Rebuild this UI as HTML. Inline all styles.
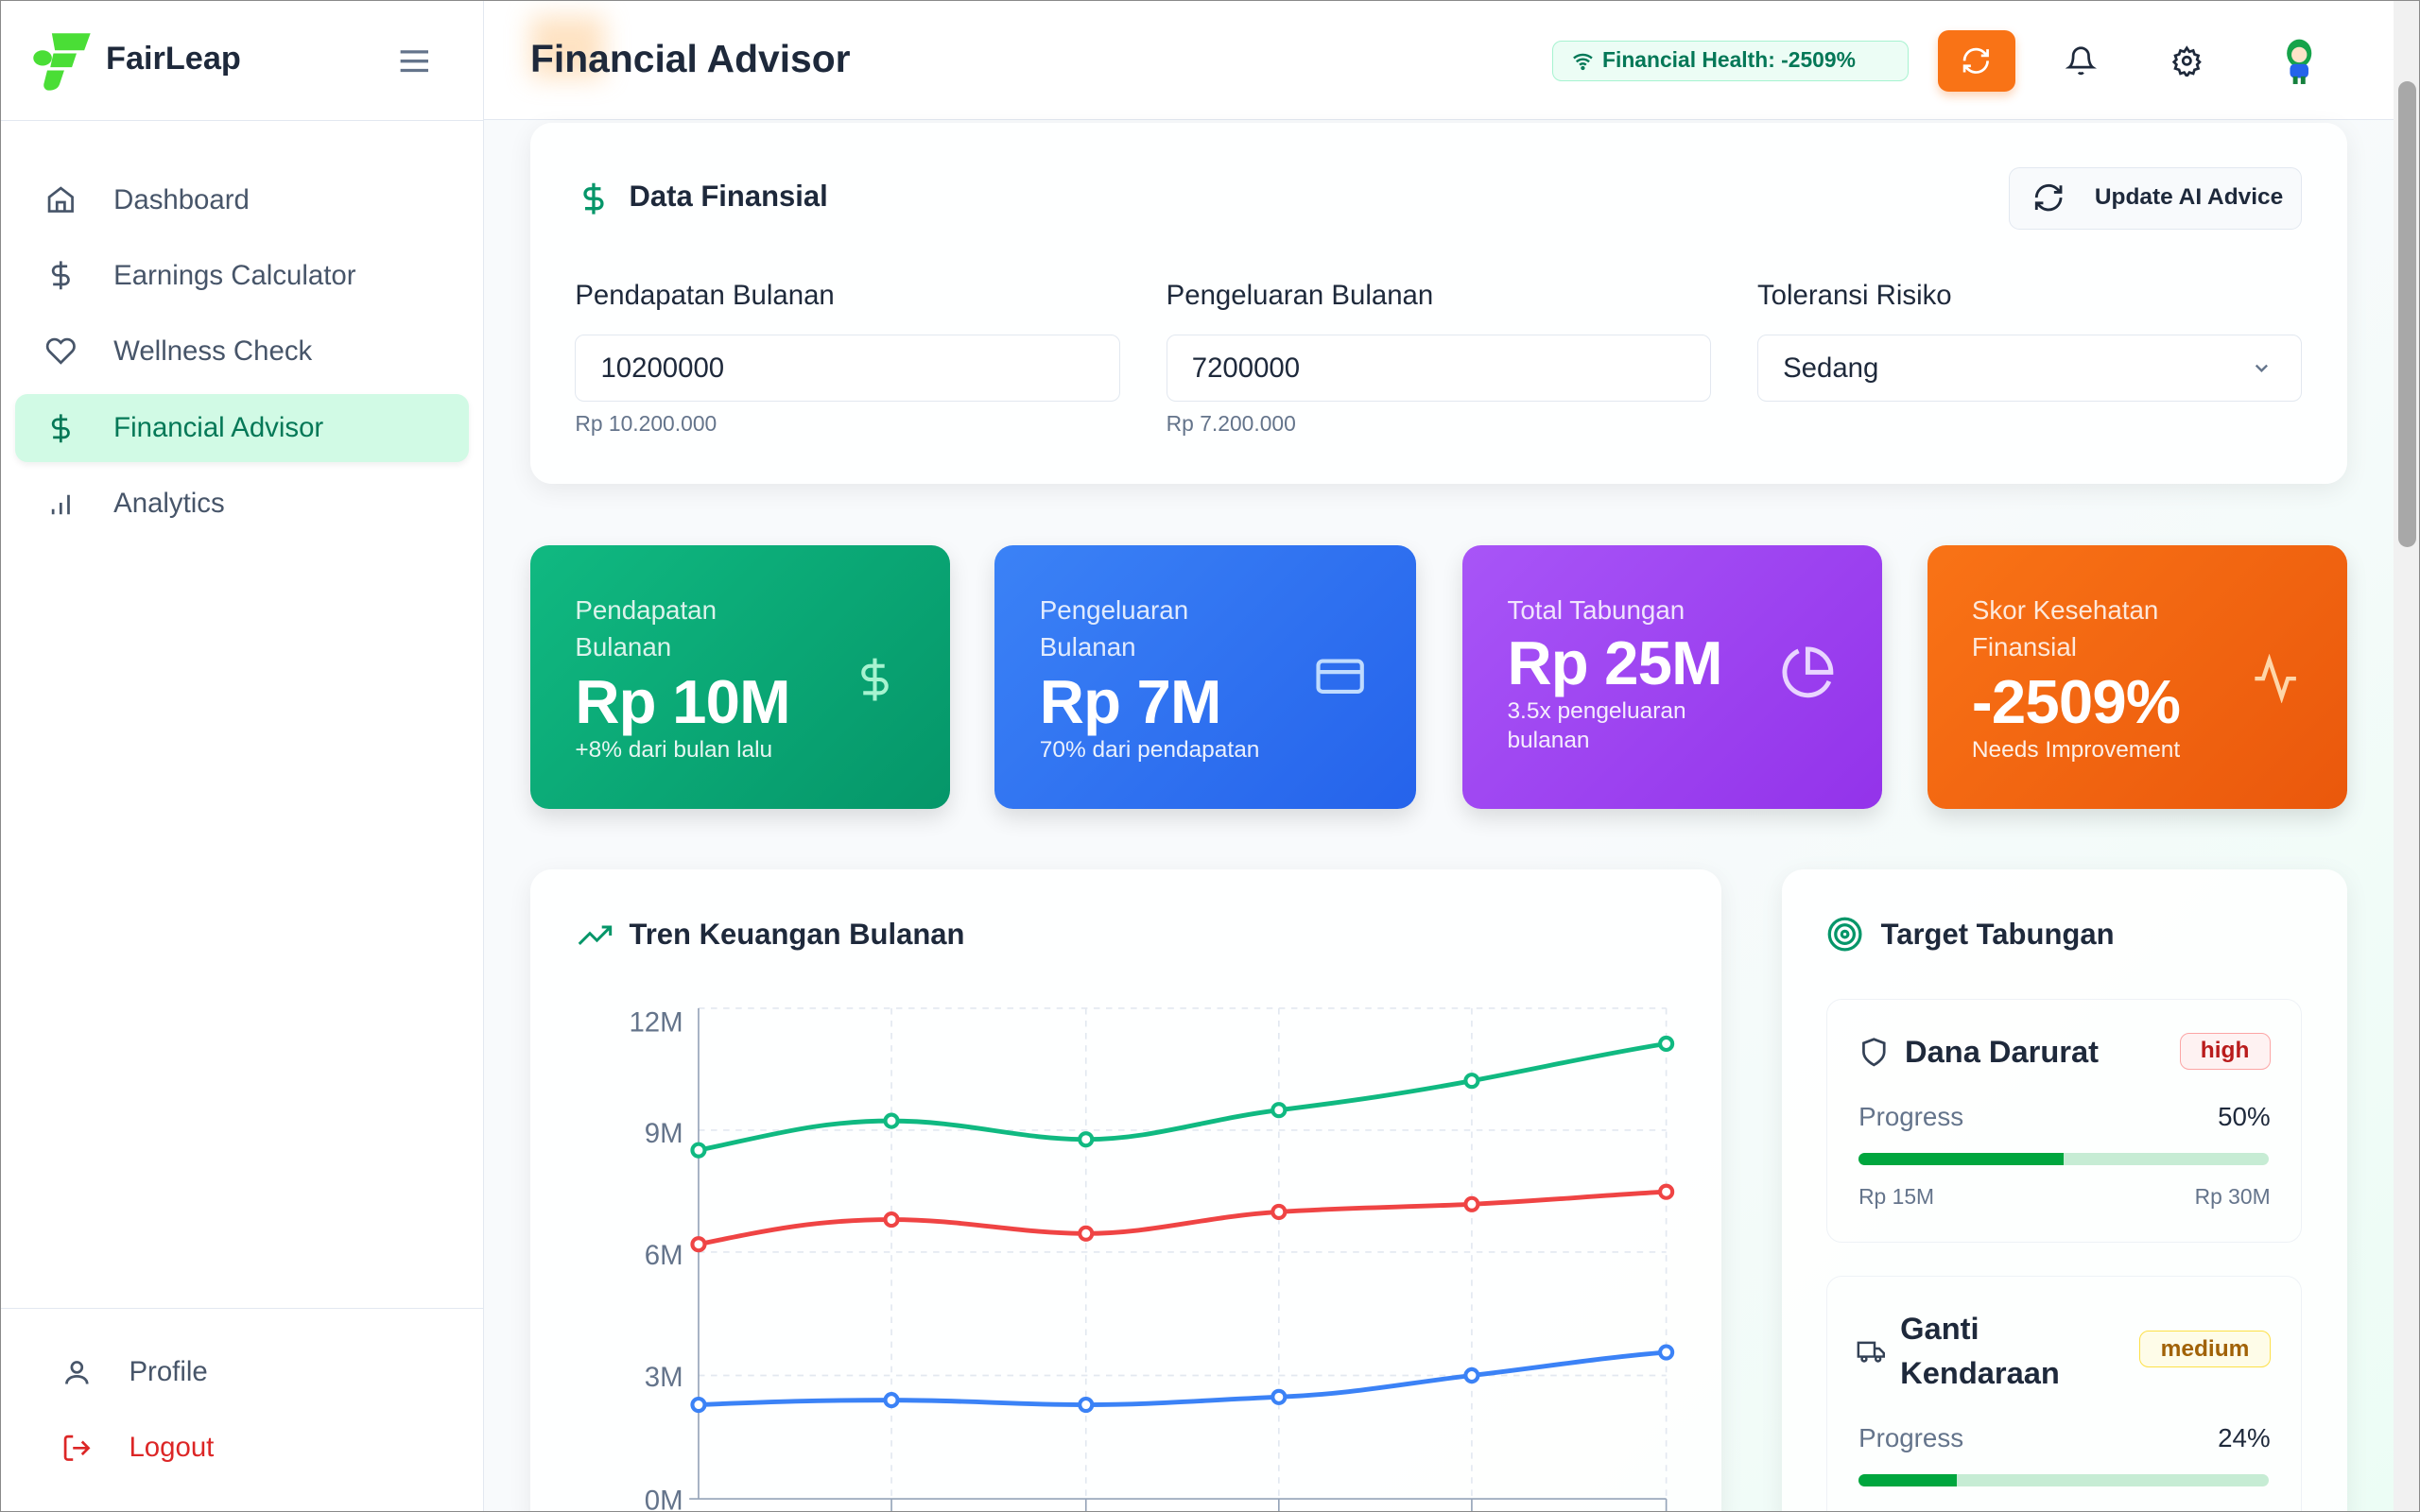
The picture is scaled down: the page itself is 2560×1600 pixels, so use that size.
<!DOCTYPE html>
<html><head><meta charset="utf-8"><style>
*{box-sizing:border-box;margin:0;padding:0}
html,body{width:2560px;height:1600px;overflow:hidden;background:#fff}
#w{zoom:1.632653;width:1568px;height:980px;position:relative;font-family:"Liberation Sans",sans-serif;color:#1e293b;background:linear-gradient(135deg,#f8fafc 0%,#f8fafc 60%,#ecfdf5 100%);border:1px solid #8a8a8a;overflow:hidden}
.a{position:absolute}
.side{left:0;top:0;width:313px;height:980px;background:#fff;border-right:1px solid #e2e8f0}
.nav{left:9px;width:294px;height:44px;border-radius:8px;display:flex;align-items:center;font-size:18px;color:#475569}
.nav svg{margin-left:20px;margin-right:24px}
.hdr{left:313px;top:0;width:1237px;height:77px;background:rgba(255,255,255,.9);border-bottom:1px solid #e2e8f0}
.card{background:rgba(255,255,255,.85);border-radius:14px;box-shadow:0 4px 16px rgba(0,0,0,.07)}
.lbl{font-size:18px;color:#1e293b}
.inp{height:44px;border:1px solid #e2e8f0;border-radius:6px;background:#fff;font-size:18px;padding-left:16px;display:flex;align-items:center}
.sub{font-size:14px;color:#64748b}
.stat{top:353px;height:171px;border-radius:12px;color:#fff;box-shadow:0 6px 14px rgba(0,0,0,.12)}
.stat .t{position:absolute;left:29px;top:30px;font-size:17px;line-height:24px;opacity:.85}
.stat .v{position:absolute;left:29px;font-size:40px;font-weight:bold;letter-spacing:-0.5px}
.stat .s{position:absolute;left:29px;font-size:15px;opacity:.9;line-height:19px}
.stat svg{position:absolute;right:26px;top:68px}
.badge{font-size:15px;font-weight:bold;border-radius:6px;padding:3px 13px}
</style></head><body><div id="w">
<div class="a side">
 <div class="a" style="left:0;top:77px;width:313px;border-top:1px solid #e2e8f0"></div>
 <svg class="a" style="left:19px;top:19px" width="40" height="40" viewBox="0 0 40 40"><path d="M14 2h25l-4 11H16z" fill="#4ade36"/><ellipse cx="8" cy="18" rx="6" ry="5" fill="#4ade36"/><path d="M15 15h15l-3 9H13z" fill="#4ade36"/><path d="M11 26h11l-3 9c-1 3-4 4-7 4-2 0-4-2-3-5z" fill="#4ade36"/></svg>
 <div class="a" style="left:68px;top:26px;font-size:21px;font-weight:bold;color:#1e293b">FairLeap</div>
 <svg class="a" style="left:258px;top:30px" width="20" height="18"><path d="M1 3h18M1 9h18M1 15h18" stroke="#64748b" stroke-width="2"/></svg>
 <div class="a nav" style="top:107px"><svg width="20" height="20" viewBox="0 0 24 24" fill="none" stroke="#475569" stroke-width="2"><path d="M3 10l9-7 9 7v11H3z M9 21v-7h6v7"/></svg>Dashboard</div>
 <div class="a nav" style="top:156px"><svg width="20" height="20" viewBox="0 0 24 24" fill="none" stroke="#475569" stroke-width="2"><path d="M12 1v22M17 5H9.5a3.5 3.5 0 000 7h5a3.5 3.5 0 010 7H6"/></svg>Earnings Calculator</div>
 <div class="a nav" style="top:205px"><svg width="20" height="20" viewBox="0 0 24 24" fill="none" stroke="#475569" stroke-width="2"><path d="M20.8 4.6a5.5 5.5 0 00-7.8 0L12 5.7l-1-1.1a5.5 5.5 0 00-7.8 7.8l8.8 8.8 8.8-8.8a5.5 5.5 0 000-7.8z"/></svg>Wellness Check</div>
 <div class="a nav" style="top:255px;background:#d1fae5;color:#047857;box-shadow:0 2px 4px rgba(0,0,0,.06)"><svg width="20" height="20" viewBox="0 0 24 24" fill="none" stroke="#047857" stroke-width="2"><path d="M12 1v22M17 5H9.5a3.5 3.5 0 000 7h5a3.5 3.5 0 010 7H6"/></svg>Financial Advisor</div>
 <div class="a nav" style="top:304px"><svg width="20" height="20" viewBox="0 0 24 24" fill="none" stroke="#475569" stroke-width="2"><path d="M6 20v-4M12 20v-9M18 20V5"/></svg>Analytics</div>
 <div class="a" style="left:0;top:847px;width:313px;border-top:1px solid #e2e8f0"></div>
 <div class="a nav" style="top:867px;left:19px"><svg width="20" height="20" viewBox="0 0 24 24" fill="none" stroke="#475569" stroke-width="2"><circle cx="12" cy="8" r="4"/><path d="M4 21c0-4 4-6 8-6s8 2 8 6"/></svg>Profile</div>
 <div class="a nav" style="top:916px;left:19px;color:#dc2626"><svg width="20" height="20" viewBox="0 0 24 24" fill="none" stroke="#dc2626" stroke-width="2"><path d="M9 21H5a2 2 0 01-2-2V5a2 2 0 012-2h4M16 17l5-5-5-5M21 12H9"/></svg>Logout</div>
</div>
<div class="a hdr">
 <div class="a" style="left:30px;top:10px;width:48px;height:40px;background:#fed7aa;filter:blur(8px);opacity:.7"></div>
 <div class="a" style="left:30px;top:23px;font-size:25px;font-weight:bold;color:#1e293b">Financial Advisor</div>
 <div class="a" style="left:692px;top:26px;width:231px;height:26px;border:1px solid #a7f3d0;background:#ecfdf5;border-radius:6px;font-size:14px;font-weight:bold;color:#047857;padding-left:32px;line-height:24px">Financial Health: -2509%</div>
 <svg class="a" style="left:705px;top:32px" width="14" height="14" viewBox="0 0 24 24" fill="none" stroke="#047857" stroke-width="2.5"><path d="M2 9a15 15 0 0120 0M5 13a10 10 0 0114 0M8.5 16.5a5 5 0 017 0"/><circle cx="12" cy="20" r="1"/></svg>
 <div class="a" style="left:942px;top:19px;width:50px;height:40px;background:#f97316;border-radius:7px;box-shadow:0 3px 6px rgba(249,115,22,.3)"></div>
 <svg class="a" style="left:957px;top:29px" width="20" height="20" viewBox="0 0 24 24" fill="none" stroke="#fff" stroke-width="2"><path d="M21 12a9 9 0 01-15 6.7L3 16M3 12a9 9 0 0115-6.7L21 8M21 3v5h-5M3 21v-5h5"/></svg>
 <svg class="a" style="left:1025px;top:29px" width="20" height="20" viewBox="0 0 24 24" fill="none" stroke="#1e293b" stroke-width="2"><path d="M18 8a6 6 0 00-12 0c0 7-3 9-3 9h18s-3-2-3-9M13.7 21a2 2 0 01-3.4 0"/></svg>
 <svg class="a" style="left:1093px;top:29px" width="20" height="20" viewBox="0 0 24 24" fill="none" stroke="#1e293b" stroke-width="2"><circle cx="12" cy="12" r="3"/><path d="M12 2l2 3 3-1 1 3 3 1-1 3 2 2-2 2 1 3-3 1-1 3-3-1-2 3-2-3-3 1-1-3-3-1 1-3-2-2 2-2-1-3 3-1 1-3 3 1z"/></svg>
 <svg class="a" style="left:1163px;top:24px" width="26" height="30" viewBox="0 0 26 30"><ellipse cx="13" cy="10" rx="8" ry="9" fill="#16a34a"/><circle cx="13" cy="11" r="5" fill="#fde3c8"/><rect x="7" y="17" width="12" height="9" rx="3" fill="#2563eb"/><rect x="9" y="25" width="3" height="5" fill="#15803d"/><rect x="14" y="25" width="3" height="5" fill="#15803d"/></svg>
</div>
<div class="a" style="left:1550px;top:0;width:18px;height:980px;background:#f1f1f1"></div>
<div class="a" style="left:1553px;top:52px;width:12px;height:302px;background:#a8a8a8;border-radius:6px"></div>

<div class="a card" style="left:343px;top:79px;width:1177px;height:234px">
 <svg class="a" style="left:30px;top:36px" width="22" height="26" viewBox="0 0 24 24" fill="none" stroke="#059669" stroke-width="2.2"><path d="M12 1v22M17 5H9.5a3.5 3.5 0 000 7h5a3.5 3.5 0 010 7H6"/></svg>
 <div class="a" style="left:64px;top:37px;font-size:19px;font-weight:bold">Data Finansial</div>
 <div class="a" style="left:958px;top:29px;width:190px;height:40px;border:1px solid #e2e8f0;border-radius:7px;background:#f8fafc;font-size:15px;font-weight:bold;padding-left:55px;line-height:38px">Update AI Advice</div>
 <svg class="a" style="left:973px;top:38px" width="21" height="21" viewBox="0 0 24 24" fill="none" stroke="#1e293b" stroke-width="2"><path d="M21 12a9 9 0 01-15 6.7L3 16M3 12a9 9 0 0115-6.7L21 8M21 3v5h-5M3 21v-5h5"/></svg>
 <div class="a lbl" style="left:29px;top:102px">Pendapatan Bulanan</div>
 <div class="a inp" style="left:29px;top:137px;width:353px">10200000</div>
 <div class="a sub" style="left:29px;top:187px">Rp 10.200.000</div>
 <div class="a lbl" style="left:412px;top:102px">Pengeluaran Bulanan</div>
 <div class="a inp" style="left:412px;top:137px;width:353px">7200000</div>
 <div class="a sub" style="left:412px;top:187px">Rp 7.200.000</div>
 <div class="a lbl" style="left:795px;top:102px">Toleransi Risiko</div>
 <div class="a inp" style="left:795px;top:137px;width:353px">Sedang</div>
 <svg class="a" style="left:1115px;top:152px" width="14" height="14" viewBox="0 0 24 24" fill="none" stroke="#64748b" stroke-width="2.5"><path d="M6 9l6 6 6-6"/></svg>
</div>

<div class="a stat" style="left:343px;width:272px;background:linear-gradient(135deg,#10b981,#059669)">
 <div class="t">Pendapatan<br>Bulanan</div><div class="v" style="top:78px">Rp 10M</div><div class="s" style="top:123px">+8% dari bulan lalu</div>
 <svg width="30" height="38" viewBox="0 0 24 24" fill="none" stroke="#a7f3d0" stroke-width="2" style="right:34px"><path d="M12 1v22M17 5H9.5a3.5 3.5 0 000 7h5a3.5 3.5 0 010 7H6"/></svg></div>
<div class="a stat" style="left:644px;width:273px;background:linear-gradient(135deg,#3b82f6,#2563eb)">
 <div class="t">Pengeluaran<br>Bulanan</div><div class="v" style="top:78px">Rp 7M</div><div class="s" style="top:123px">70% dari pendapatan</div>
 <svg width="40" height="34" viewBox="0 0 24 24" fill="none" stroke="#bfdbfe" stroke-width="1.8" style="right:29px"><rect x="2" y="5" width="20" height="14" rx="2"/><path d="M2 10h20"/></svg></div>
<div class="a stat" style="left:947px;width:272px;background:linear-gradient(135deg,#a855f7,#9333ea)">
 <div class="t">Total Tabungan</div><div class="v" style="top:53px">Rp 25M</div><div class="s" style="top:98px">3.5x pengeluaran<br>bulanan</div>
 <svg width="36" height="36" viewBox="0 0 24 24" fill="none" stroke="#e9d5ff" stroke-width="2" style="top:64px;right:30px"><path d="M21.2 15.9A10 10 0 118 2.8M22 12A10 10 0 0012 2v10z"/></svg></div>
<div class="a stat" style="left:1248px;width:272px;background:linear-gradient(135deg,#f97316,#ea580c)">
 <div class="t">Skor Kesehatan<br>Finansial</div><div class="v" style="top:78px">-2509%</div><div class="s" style="top:123px">Needs Improvement</div>
 <svg width="32" height="32" viewBox="0 0 24 24" fill="none" stroke="#fed7aa" stroke-width="2" style="top:70px;right:30px"><path d="M22 12h-4l-3 9L9 3l-3 9H2"/></svg></div>

<div class="a card" style="left:343px;top:563px;width:772px;height:430px">
 <svg class="a" style="left:29px;top:32px" width="26" height="22" viewBox="0 0 24 24" fill="none" stroke="#059669" stroke-width="2"><path d="M23 6l-9.5 9.5-5-5L1 18M17 6h6v6"/></svg>
 <div class="a" style="left:64px;top:31px;font-size:19px;font-weight:bold">Tren Keuangan Bulanan</div>
</div>
<svg class="a" style="left:343px;top:563px" width="772" height="430" viewBox="343 563 772 430" font-family="Liberation Sans" font-size="18" fill="#64748b">
 <g stroke="#e2e8f0" stroke-dasharray="4 4"><path d="M452 653H1079M452 732H1079M452 811H1079M452 891H1079M577 653V971M703 653V971M828 653V971M953 653V971M1079 653V971"/></g>
 <path d="M452 653V971H1079M446 971H452M577 971v8M703 971v8M828 971v8M953 971v8M1079 971v8" stroke="#94a3b8" fill="none"/>
 <text x="442" y="668" text-anchor="end">12M</text><text x="442" y="740" text-anchor="end">9M</text><text x="442" y="819" text-anchor="end">6M</text><text x="442" y="898" text-anchor="end">3M</text><text x="442" y="978" text-anchor="end">0M</text>
 <g fill="none" stroke-width="3">
 <path d="M452 745C500 735 530 726 577 726S660 738 703 738S780 725 828 719S910 708 953 700S1040 682 1079 676" stroke="#10b981"/>
 <path d="M452 806C500 796 530 790 577 790S660 799 703 799S780 788 828 785S910 782 953 780S1040 774 1079 772" stroke="#ef4444"/>
 <path d="M452 910C500 908 530 907 577 907S660 910 703 910S780 907 828 905S910 896 953 891S1040 879 1079 876" stroke="#3b82f6"/>
 </g>
 <g fill="#fff" stroke-width="2.5">
 <g stroke="#10b981"><circle cx="452" cy="745" r="4"/><circle cx="577" cy="726" r="4"/><circle cx="703" cy="738" r="4"/><circle cx="828" cy="719" r="4"/><circle cx="953" cy="700" r="4"/><circle cx="1079" cy="676" r="4"/></g>
 <g stroke="#ef4444"><circle cx="452" cy="806" r="4"/><circle cx="577" cy="790" r="4"/><circle cx="703" cy="799" r="4"/><circle cx="828" cy="785" r="4"/><circle cx="953" cy="780" r="4"/><circle cx="1079" cy="772" r="4"/></g>
 <g stroke="#3b82f6"><circle cx="452" cy="910" r="4"/><circle cx="577" cy="907" r="4"/><circle cx="703" cy="910" r="4"/><circle cx="828" cy="905" r="4"/><circle cx="953" cy="891" r="4"/><circle cx="1079" cy="876" r="4"/></g>
 </g>
</svg>

<div class="a card" style="left:1154px;top:563px;width:366px;height:430px">
 <svg class="a" style="left:29px;top:30px" width="24" height="24" viewBox="0 0 24 24" fill="none" stroke="#059669" stroke-width="2"><circle cx="12" cy="12" r="10"/><circle cx="12" cy="12" r="6"/><circle cx="12" cy="12" r="2"/></svg>
 <div class="a" style="left:64px;top:31px;font-size:19px;font-weight:bold">Target Tabungan</div>
 <div class="a" style="left:29px;top:84px;width:308px;height:158px;border:1px solid #eef2f6;border-radius:10px">
  <svg class="a" style="left:20px;top:24px" width="20" height="20" viewBox="0 0 24 24" fill="none" stroke="#334155" stroke-width="2"><path d="M12 22s8-4 8-10V5l-8-3-8 3v7c0 6 8 10 8 10z"/></svg>
  <div class="a" style="left:50px;top:22px;font-size:20px;font-weight:bold">Dana Darurat</div>
  <div class="a badge" style="right:20px;top:21px;background:#fef2f2;border:1px solid #fca5a5;color:#b91c1c">high</div>
  <div class="a" style="left:20px;top:66px;font-size:17px;color:#64748b">Progress</div>
  <div class="a" style="right:20px;top:66px;font-size:17px">50%</div>
  <div class="a" style="left:20px;top:99px;width:266px;height:8px;background:#c6ecd4;border-radius:4px"><div style="width:50%;height:8px;background:#00a63e;border-radius:4px 0 0 4px"></div></div>
  <div class="a sub" style="left:20px;top:119px">Rp 15M</div>
  <div class="a sub" style="right:20px;top:119px">Rp 30M</div>
 </div>
 <div class="a" style="left:29px;top:263px;width:308px;height:200px;border:1px solid #eef2f6;border-radius:10px">
  <svg class="a" style="left:18px;top:40px" width="20" height="18" viewBox="0 0 24 24" fill="none" stroke="#334155" stroke-width="2"><path d="M1 4h14v12H1zM15 9h4l4 4v3h-8z"/><circle cx="6" cy="18" r="2"/><circle cx="18" cy="18" r="2"/></svg>
  <div class="a" style="left:47px;top:19px;font-size:20px;font-weight:bold;line-height:29px">Ganti<br>Kendaraan</div>
  <div class="a badge" style="right:20px;top:35px;background:#fefce8;border:1px solid #fde047;color:#a16207">medium</div>
  <div class="a" style="left:20px;top:95px;font-size:17px;color:#64748b">Progress</div>
  <div class="a" style="right:20px;top:95px;font-size:17px">24%</div>
  <div class="a" style="left:20px;top:128px;width:266px;height:8px;background:#c6ecd4;border-radius:4px"><div style="width:24%;height:8px;background:#00a63e;border-radius:4px 0 0 4px"></div></div>
 </div>
</div>
</div></body></html>
